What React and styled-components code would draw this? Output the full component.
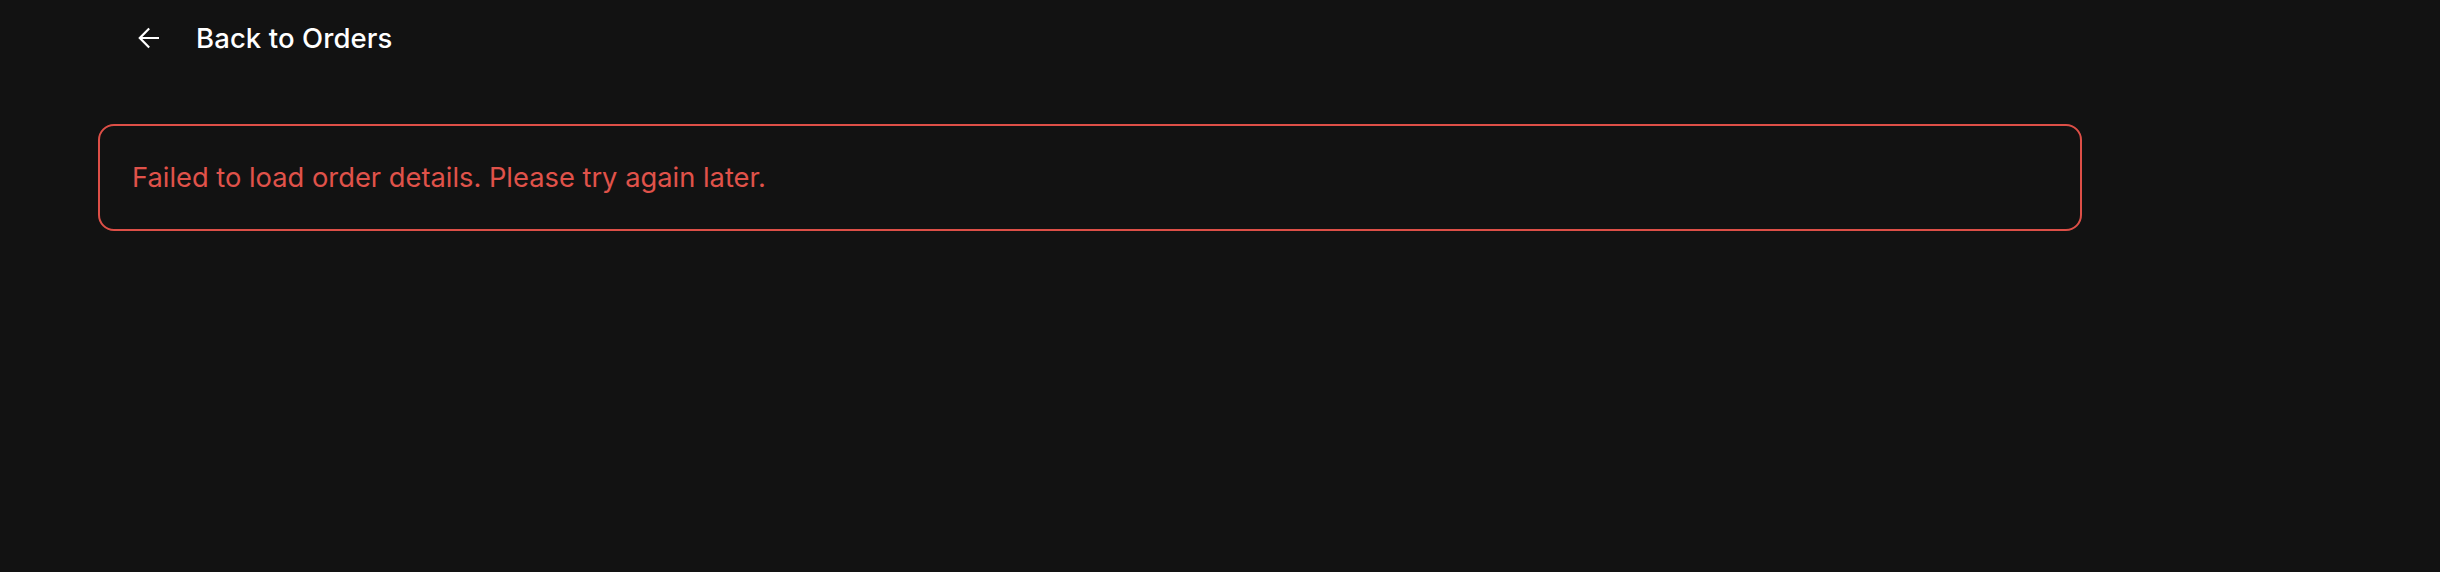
import React from "react";
import styled, { createGlobalStyle } from "styled-components";

const Global = createGlobalStyle`
  html, body { margin: 0; padding: 0; background: #121212; }
  body { font-family: Inter, "Noto Sans", sans-serif; color: #fff; }
`;

const Page = styled.main`
  min-height: 572px;
  box-sizing: border-box;
  padding: 12px 358px 0 98px;
  display: flex;
  flex-direction: column;
  align-items: stretch;
`;

const BackButton = styled.button`
  align-self: flex-start;
  display: flex;
  align-items: center;
  gap: 37px;
  margin-left: 24px;
  height: 52px;
  padding: 0 15px;
  background: transparent;
  border: none;
  color: #ffffff;
  font-family: Inter, "Noto Sans", sans-serif;
  font-size: 27.5px;
  font-weight: 500;
  letter-spacing: 0.1px;
  cursor: pointer;
`;

const Alert = styled.div`
  margin-top: 60px;
  height: 107px;
  box-sizing: border-box;
  border: 2px solid #dd4f47;
  border-radius: 16px;
  display: flex;
  align-items: center;
  padding: 0 32px;
  color: #e0524a;
  font-size: 27.3px;
  font-weight: 400;
`;

function ArrowBack() {
  return (
    <svg width="22" height="22" viewBox="4 4 16 16" fill="#ffffff" aria-hidden="true">
      <path d="M20 11.2H7.9l5.5-5.5L12.3 4.6 4.9 12l7.4 7.4 1.1-1.1-5.5-5.5H20z" />
    </svg>
  );
}

export default function App() {
  return (
    <>
      <Global />
      <Page>
        <BackButton>
          <ArrowBack />
          Back to Orders
        </BackButton>
        <Alert>Failed to load order details. Please try again later.</Alert>
      </Page>
    </>
  );
}
